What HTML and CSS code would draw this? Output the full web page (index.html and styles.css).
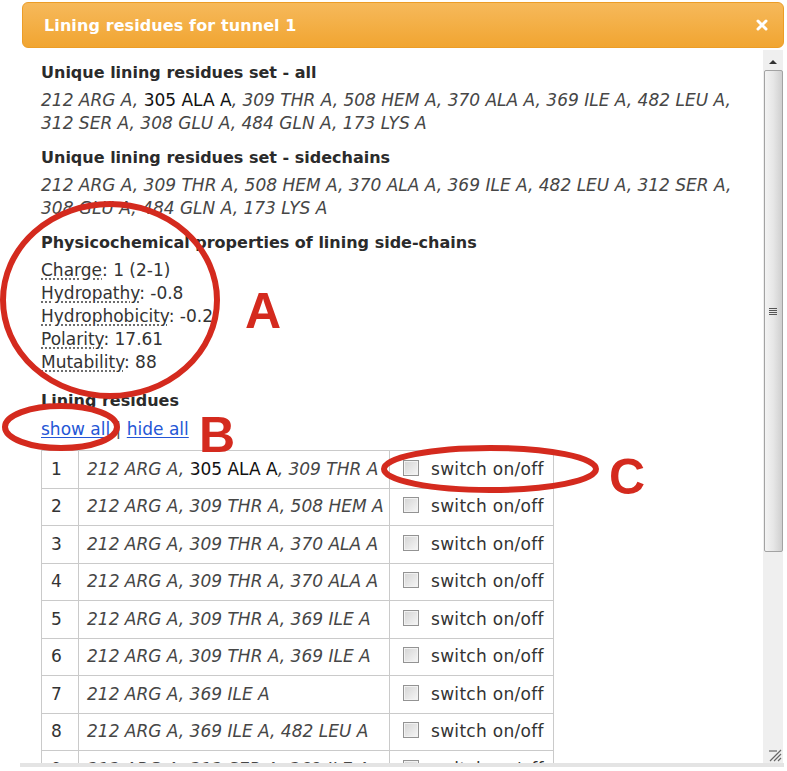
FILE: index.html
```html
<!DOCTYPE html>
<html>
<head>
<meta charset="utf-8">
<link rel="stylesheet" href="styles.css">
</head>
<body>
<div class="dialog">
  <div class="titlebar">
    <span class="title">Lining residues for tunnel 1</span>
    <svg class="close" width="12" height="12" viewBox="0 0 12 12"><path d="M2 2 L10 10 M10 2 L2 10" stroke="#fff" stroke-width="3" stroke-linecap="round"/></svg>
  </div>
  <div class="body">
    <div class="content">
      <section class="block">
        <h3>Unique lining residues set - all</h3>
        <p class="res">212 ARG A, <span class="bb">305 ALA A</span>, 309 THR A, 508 HEM A, 370 ALA A, 369 ILE A, 482 LEU A, 312 SER A, 308 GLU A, 484 GLN A, 173 LYS A</p>
      </section>
      <section class="block">
        <h3>Unique lining residues set - sidechains</h3>
        <p class="res">212 ARG A, 309 THR A, 508 HEM A, 370 ALA A, 369 ILE A, 482 LEU A, 312 SER A, 308 GLU A, 484 GLN A, 173 LYS A</p>
      </section>
      <section class="block props">
        <h3>Physicochemical properties of lining side-chains</h3>
        <div class="prop"><abbr>Charge</abbr>: 1 (2-1)</div>
        <div class="prop"><abbr>Hydropathy</abbr>: -0.8</div>
        <div class="prop"><abbr>Hydrophobicity</abbr>: -0.2</div>
        <div class="prop"><abbr>Polarity</abbr>: 17.61</div>
        <div class="prop"><abbr>Mutability</abbr>: 88</div>
      </section>
      <section class="block lining">
        <h3>Lining residues</h3>
        <div class="links"><a href="#">show all</a> | <a href="#">hide all</a></div>
        <table class="restable">
          <colgroup><col class="c1"><col class="c2"><col class="c3"></colgroup>
          <tr><td class="n">1</td><td class="r">212 ARG A, <span class="bb">305 ALA A</span>, 309 THR A</td><td class="s"><span class="cb"></span>switch on/off</td></tr>
          <tr><td class="n">2</td><td class="r">212 ARG A, 309 THR A, 508 HEM A</td><td class="s"><span class="cb"></span>switch on/off</td></tr>
          <tr><td class="n">3</td><td class="r">212 ARG A, 309 THR A, 370 ALA A</td><td class="s"><span class="cb"></span>switch on/off</td></tr>
          <tr><td class="n">4</td><td class="r">212 ARG A, 309 THR A, 370 ALA A</td><td class="s"><span class="cb"></span>switch on/off</td></tr>
          <tr><td class="n">5</td><td class="r">212 ARG A, 309 THR A, 369 ILE A</td><td class="s"><span class="cb"></span>switch on/off</td></tr>
          <tr><td class="n">6</td><td class="r">212 ARG A, 309 THR A, 369 ILE A</td><td class="s"><span class="cb"></span>switch on/off</td></tr>
          <tr><td class="n">7</td><td class="r">212 ARG A, 369 ILE A</td><td class="s"><span class="cb"></span>switch on/off</td></tr>
          <tr><td class="n">8</td><td class="r">212 ARG A, 369 ILE A, 482 LEU A</td><td class="s"><span class="cb"></span>switch on/off</td></tr>
          <tr><td class="n">9</td><td class="r">212 ARG A, 312 SER A, 369 ILE A</td><td class="s"><span class="cb"></span>switch on/off</td></tr>
        </table>
      </section>
    </div>
    <div class="scrollbar">
      <div class="arrow"></div>
      <div class="thumb"><span class="grip"></span></div>
      <svg class="resize" width="14" height="14" viewBox="0 0 14 14"><path d="M2 13 L13 2 M6 13 L13 6 M10 13 L13 10" stroke="#666" stroke-width="1.2"/><path d="M1 3 H9" stroke="#666" stroke-width="1.2"/></svg>
    </div>
  </div>
  <div class="footer"></div>
</div>
<svg class="marks" width="787" height="771" viewBox="0 0 787 771">
  <g fill="none" stroke="#d42a1e" stroke-width="6">
    <ellipse cx="110" cy="300" rx="107" ry="96"/>
    <ellipse cx="61" cy="427" rx="56" ry="21"/>
    <ellipse cx="490" cy="469" rx="106" ry="21"/>
  </g>
  <g fill="#d42a1e" font-family="Liberation Sans, Arial, sans-serif" font-weight="bold" font-size="50">
    <text x="245" y="328">A</text>
    <text x="199" y="452">B</text>
    <text x="609" y="494">C</text>
  </g>
</svg>
</body>
</html>
```
FILE: styles.css
```css
html, body {
  margin: 0;
  padding: 0;
  background: #fff;
}
body {
  font-family: "DejaVu Sans", Verdana, sans-serif;
  font-size: 17px;
  color: #333;
  width: 787px;
  height: 771px;
  overflow: hidden;
  position: relative;
}
.dialog {
  margin: 2px 0 0 22px;
  width: 762px;
}
.titlebar {
  height: 46px;
  box-sizing: border-box;
  border: 1px solid #ec9d27;
  border-radius: 6px;
  background: linear-gradient(#f6b95b, #f1a531);
  display: flex;
  align-items: center;
  justify-content: space-between;
  padding: 0 15px 0 21px;
}
.title {
  color: #fff;
  font-weight: bold;
  font-size: 16px;
  letter-spacing: 0.1px;
}
.close {
  display: block;
}
.body {
  display: flex;
  height: 715px;
}
.content {
  flex: 1;
  overflow: hidden;
  padding: 13px 20px 0 19px;
}
.block {
  margin-bottom: 11px;
}
.props {
  margin-bottom: 15px;
}
h3 {
  margin: 0 0 5px;
  font-size: 16px;
  font-weight: bold;
  line-height: 23px;
  color: #2b2b2b;
}
.res {
  margin: 0;
  font-style: italic;
  line-height: 23px;
  color: #464646;
}
.bb {
  font-style: normal;
  color: #111;
}
.prop {
  line-height: 23px;
  color: #333;
}
abbr {
  text-decoration: underline dotted #555;
  text-underline-offset: 3px;
}
.lining h3 {
  margin-bottom: 6px;
}
.links {
  line-height: 23px;
  color: #555;
  margin-bottom: 9px;
}
.links a {
  color: #2456d6;
  text-decoration: underline;
  text-underline-offset: 2px;
}
.restable {
  border-collapse: collapse;
  table-layout: fixed;
  width: 512px;
}
.c1 { width: 37px; }
.c2 { width: 311px; }
.c3 { width: 164px; }
.restable td {
  border: 1px solid #cacaca;
  height: 37.5px;
  box-sizing: border-box;
  padding: 0 8px;
  line-height: 23px;
  white-space: nowrap;
  overflow: hidden;
}
.restable .n {
  padding-left: 9px;
  color: #333;
}
.restable .r {
  font-style: italic;
  color: #464646;
}
.restable .s {
  padding-left: 13px;
  color: #333;
  letter-spacing: 0.3px;
}
.cb {
  display: inline-block;
  width: 16px;
  height: 16px;
  box-sizing: border-box;
  border: 1px solid #939393;
  background: linear-gradient(135deg, #d4d4d4, #f6f6f6);
  box-shadow: inset 0 0 0 1px #f2f2f2;
  vertical-align: -1px;
  margin-right: 12px;
}
.scrollbar {
  width: 20px;
  margin: 2px 1px 0 0;
  background: #efefef;
  position: relative;
  display: flex;
  flex-direction: column;
  align-items: center;
}
.arrow {
  margin-top: 10px;
  width: 0;
  height: 0;
  border-left: 4px solid transparent;
  border-right: 4px solid transparent;
  border-bottom: 4px solid #333;
}
.thumb {
  margin-top: 6px;
  width: 19px;
  height: 482px;
  box-sizing: border-box;
  border: 1px solid #a3a3a3;
  border-radius: 2px;
  background: linear-gradient(90deg, #f3f3f3, #e6e6e6 50%, #cfcfcf);
  display: flex;
  align-items: center;
  justify-content: center;
}
.grip {
  width: 8px;
  height: 7px;
  background: repeating-linear-gradient(#555 0 1px, transparent 1px 2px);
}
.resize {
  position: absolute;
  right: 1px;
  bottom: 1px;
}
.footer {
  height: 4px;
  margin-left: -2px;
  background: #e4e4e4;
}
.marks {
  position: absolute;
  left: 0;
  top: 0;
  pointer-events: none;
}
```
